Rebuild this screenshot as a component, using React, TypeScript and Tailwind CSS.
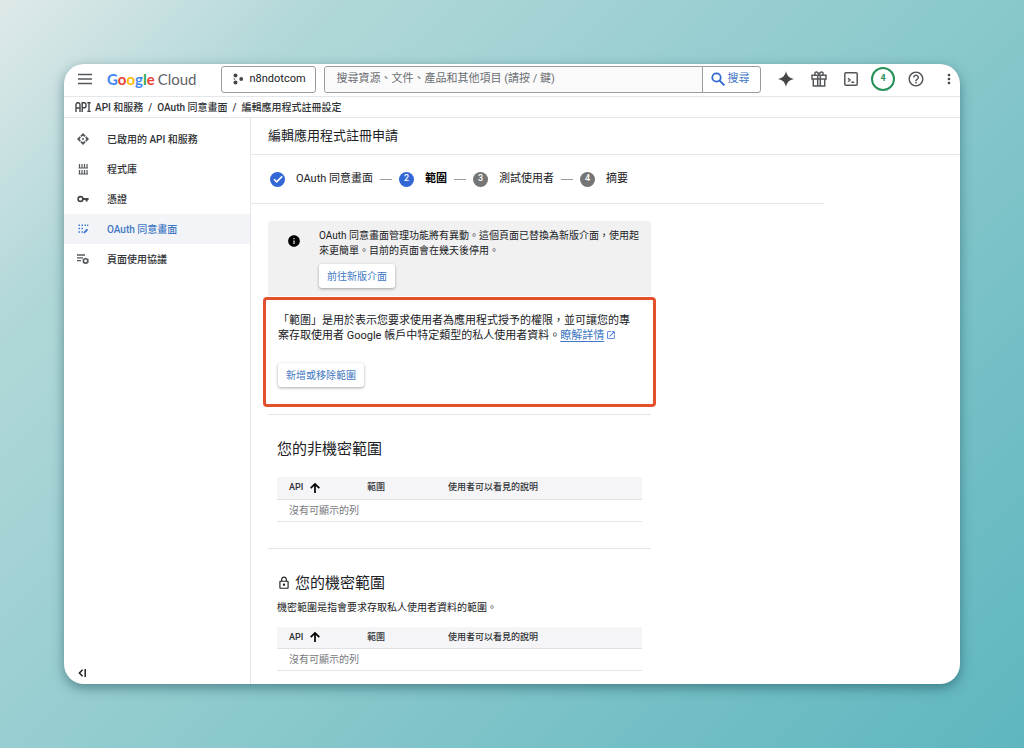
import type { ReactNode } from 'react';
import { MdHelpOutline, MdInfo, MdMoreVert, MdOpenInNew, MdOutlineLock } from 'react-icons/md';

const MenuIcon = () => (
  <svg viewBox="0 0 18 18" className="size-[18px]" fill="none" stroke="#55585b" strokeWidth="1.700">
    <path d="M2 4.500h14M2 9h14M2 13.500h14" />
  </svg>
);

const SearchIcon = () => (
  <svg viewBox="0 0 16 16" className="size-4" fill="none" stroke="#2f69cf" strokeWidth="1.800">
    <circle cx="6.500" cy="6.500" r="4.200" />
    <path d="M9.600 9.600l4.800 4.800" strokeWidth="2" />
  </svg>
);

const CheckIcon = () => (
  <svg viewBox="0 0 12 12" className="size-3" fill="none" stroke="#fff" strokeWidth="1.500">
    <path d="M2 6.200l2.700 2.700L10.200 3.400" />
  </svg>
);

const SortIcon = () => (
  <svg viewBox="0 0 12 12" className="size-3" fill="none" stroke="#000" strokeWidth="1.700">
    <path d="M6 11V2M1.700 6.200L6 1.900l4.300 4.300" />
  </svg>
);

const ProjectIcon = () => (
  <svg viewBox="0 0 12 12" className="size-3" fill="#444746">
    <circle cx="3.5" cy="2.6" r="2" />
    <circle cx="3.5" cy="9.4" r="2" />
    <circle cx="9.2" cy="6" r="1.9" />
    <circle cx="2.4" cy="6" r="0.8" />
  </svg>
);

const SparkIcon = () => (
  <svg viewBox="0 0 16 16" className="size-4" fill="#444746">
    <path d="M8 0c.9 4.700 3.300 7.100 8 8-4.700.9-7.100 3.300-8 8-.9-4.700-3.300-7.100-8-8 4.700-.9 7.100-3.300 8-8z" />
  </svg>
);

const GiftIcon = () => (
  <svg viewBox="0 0 16 16" className="size-4" fill="none" stroke="#55585b" strokeWidth="1.500">
    <path d="M1 4.300h14v3.700H1zM2.300 8v6.900h11.400V8M6.700 4.300v10.600M9.300 4.300v10.600" />
    <path d="M8 4.200C7.600 1.900 6.600.9 5.400.9 3.600.9 3.300 3.300 4.800 4.200M8 4.200C8.400 1.900 9.400.9 10.600.9c1.800 0 2.100 2.400.6 3.300" />
  </svg>
);

const ShellIcon = () => (
  <svg viewBox="0 0 14 14" className="size-3.5" fill="none" stroke="#55585b" strokeWidth="1.500">
    <rect x="0.800" y="0.800" width="12.400" height="12.400" rx="1" />
    <path d="M4 6.300l2 1.700-2 1.700M7.300 10.200h3" />
  </svg>
);

const EnabledApisIcon = () => (
  <svg viewBox="0 0 12 12" className="size-3" fill="#55585b">
    <path d="M6 0l2.700 2.700-1.200 1.200L6 2.700l-1.500 1.200-1.200-1.200zM6 12L3.300 9.300l1.200-1.200L6 9.300l1.500-1.200 1.200 1.200zM0 6l2.700-2.700 1.200 1.200L2.700 6l1.200 1.500-1.200 1.200zM12 6L9.300 8.700 8.100 7.500 9.300 6 8.100 4.500l1.200-1.200z" />
    <circle cx="6" cy="6" r="1" />
  </svg>
);

const LibraryIcon = () => (
  <svg viewBox="0 0 12 12" className="size-3" fill="none" stroke="#55585b" strokeWidth="1">
    <path d="M2.500 1v4M5 1v4M7.500 1v4M10 1v4M2.500 7v4M5 7v4M7.500 7v4M10 7v4" strokeWidth="1.200" />
    <path d="M1.500 5h9.500M1.500 11h9.500" />
  </svg>
);

const KeyIcon = () => (
  <svg viewBox="0 0 12 12" className="size-3" fill="none" stroke="#444746" strokeWidth="1.600">
    <circle cx="3.500" cy="6" r="2.400" />
    <path d="M6 6h5.600M9.600 6v2.600" strokeWidth="2" />
  </svg>
);

const ConsentIcon = () => (
  <svg viewBox="0 0 12 12" className="size-3" fill="#3c78d8">
    <path d="M1.500 1.500h1.500v1.500H1.500zM4.500 1.500h1.500v1.500H4.500zM7.500 1.500h1.500v1.500H7.500zM1.500 4.800h1.500v1.500H1.500zM4.500 4.800h1.500v1.500H4.500zM1.500 8.200h1.500v1.500H1.500zM4.500 8.200h1.500v1.500H4.500z" />
    <path d="M6.600 10.300V8.900l3.200-3.300 1.300 1.300-3.200 3.400zM10 1.500h1.300v1.500H10z" />
  </svg>
);

const AgreementIcon = () => (
  <svg viewBox="0 0 12 12" className="size-3" fill="none" stroke="#55585b" strokeWidth="1.300">
    <path d="M0 2h8M0 4.800h6M0 7.600h4" />
    <circle cx="8.600" cy="7.900" r="2.200" strokeWidth="1.600" />
    <path d="M8.600 4.700v1M8.600 10.100v1M5.800 6.300l1 .6M10.400 8.900l1 .6M5.800 9.500l1-.6M10.400 6.900l1-.6" strokeWidth="1.200" />
  </svg>
);

const ApiIcon = () => (
  <svg viewBox="0 0 16 10" className="h-2.5 w-4" fill="none" stroke="#44474a" strokeWidth="1.400">
    <path d="M1 10V2.200L2.200.8h1.600L5 2.200V10M1 6h4M7.200 10V.8h2.600L11 2v2.600L9.800 5.800H7.200M12.300.8h3.400M14 .8v8.600M12.300 9.400h3.400" />
  </svg>
);

const CollapseIcon = () => (
  <svg viewBox="0 0 9 8" className="h-2 w-[9px]" fill="none" stroke="#202124" strokeWidth="1.500">
    <path d="M4.600.8L1.400 4l3.200 3.200M7.200 0v8" />
  </svg>
);

const navItems: { label: string; icon: ReactNode; active?: boolean }[] = [
  { label: '已啟用的 API 和服務', icon: <EnabledApisIcon /> },
  { label: '程式庫', icon: <LibraryIcon /> },
  { label: '憑證', icon: <KeyIcon /> },
  { label: 'OAuth 同意畫面', icon: <ConsentIcon />, active: true },
  { label: '頁面使用協議', icon: <AgreementIcon /> },
];

const steps = [
  { label: 'OAuth 同意畫面', state: 'done' },
  { label: '範圍', state: 'current' },
  { label: '測試使用者', state: 'todo' },
  { label: '摘要', state: 'todo' },
];

const Header = () => (
  <header className="flex h-[33px] items-center border-b border-[#e4e6ea] pb-0.5 pl-3 pr-[3px]">
    <button type="button" aria-label="選單">
      <MenuIcon />
    </button>
    <a href="#" className="ml-[13px] flex gap-[3px] text-[15px] leading-5" style={{ fontFamily: 'Lato, sans-serif' }}>
      <span className="font-bold">
        <span className="text-[#4285f4]">G</span>
        <span className="text-[#ea4335]">o</span>
        <span className="text-[#fbbc04]">o</span>
        <span className="text-[#4285f4]">g</span>
        <span className="text-[#34a853]">l</span>
        <span className="text-[#ea4335]">e</span>
      </span>
      <span className="text-[#5f6368]">Cloud</span>
    </a>
    <button
      type="button"
      className="ml-6 flex h-[27px] w-[95px] shrink-0 items-center gap-1.5 rounded-[3px] border border-[#9a9ca0] pl-2.5 text-[11px]"
    >
      <ProjectIcon />
      n8ndotcom
    </button>
    <form className="ml-2 flex h-[27px] min-w-0 flex-1 rounded-[3px] border border-[#9a9ca0]">
      <input
        type="search"
        aria-label="搜尋"
        placeholder="搜尋資源、文件、產品和其他項目 (請按 / 鍵)"
        className="min-w-0 flex-1 rounded-l-[3px] bg-[#fafafa] px-3 text-[11px] placeholder:text-[#6b6e72]"
      />
      <button
        type="button"
        className="flex w-[58px] items-center justify-center gap-0.5 border-l border-[#9a9ca0] pr-1 text-[11px] text-[#3f76c4]"
      >
        <SearchIcon />
        搜尋
      </button>
    </form>
    <div className="ml-[17px] flex items-center gap-[17px]">
      <button type="button" aria-label="Gemini"><SparkIcon /></button>
      <button type="button" aria-label="禮物"><GiftIcon /></button>
      <button type="button" aria-label="Cloud Shell"><ShellIcon /></button>
    </div>
    <button
      type="button"
      className="ml-[13px] size-6 rounded-full border-2 border-[#27915a] text-[9px] font-bold text-[#27915a]"
    >
      4
    </button>
    <button type="button" aria-label="說明" className="ml-3 text-[#55585b]">
      <MdHelpOutline className="size-[18px]" />
    </button>
    <button type="button" aria-label="更多" className="ml-4 text-[#444746]">
      <MdMoreVert className="size-4" />
    </button>
  </header>
);

const Breadcrumb = () => (
  <nav className="flex h-[21px] items-center gap-[5px] border-b border-[#e4e6ea] pl-[11px] text-[10px] font-medium text-[#303236]">
    <a href="#" className="flex items-center gap-1">
      <ApiIcon />
      API 和服務
    </a>
    <span>/</span>
    <a href="#">OAuth 同意畫面</a>
    <span>/</span>
    <span>編輯應用程式註冊設定</span>
  </nav>
);

const Sidebar = () => (
  <aside className="flex w-[187px] shrink-0 flex-col border-r border-[#e4e6ea] pt-1.5">
    {navItems.map((item) => (
      <a
        key={item.label}
        href="#"
        className={`flex h-[30px] items-center gap-[18px] pl-[13px] text-[10px] font-medium ${
          item.active ? 'bg-[#f3f4f8] text-[#3f78c3]' : 'text-[#303236]'
        }`}
      >
        {item.icon}
        {item.label}
      </a>
    ))}
    <button type="button" aria-label="收合" className="mb-[7px] ml-3.5 mt-auto w-4">
      <CollapseIcon />
    </button>
  </aside>
);

const Stepper = () => (
  <ol className="mr-[136px] flex h-[49px] items-center border-b border-[#e4e6ea] pl-[19px] text-[11px]">
    {steps.map((step, index) => (
      <li key={step.label} className="flex items-center">
        {index > 0 && <span className="mx-[7px] h-px w-3 bg-[#9a9ca0]" />}
        <span
          className={`flex size-[15px] items-center justify-center rounded-full text-[9px] font-medium text-white ${
            step.state === 'todo' ? 'bg-[#757575]' : 'bg-[#3367d6]'
          }`}
        >
          {step.state === 'done' ? <CheckIcon /> : index + 1}
        </span>
        <span className={`ml-[11px] ${step.state === 'current' ? 'font-bold text-black' : ''}`}>{step.label}</span>
      </li>
    ))}
  </ol>
);

const ScopeTable = () => (
  <table className="w-full table-fixed text-left">
    <thead>
      <tr className="h-[22px] border-b border-[#e0e2e6] bg-[#f5f5f7] text-[9px] text-[#303236]">
        <th className="w-[78px] pl-3 font-medium">
          <span className="flex items-center gap-1.5">
            API
            <SortIcon />
          </span>
        </th>
        <th className="w-[81px] pl-3 font-medium">範圍</th>
        <th className="pl-3 font-medium">使用者可以看見的說明</th>
      </tr>
    </thead>
    <tbody>
      <tr className="h-[22px] border-b border-[#e4e6ea] text-[10px] text-[#77797d]">
        <td colSpan={3} className="pl-3">沒有可顯示的列</td>
      </tr>
    </tbody>
  </table>
);

const raisedButton =
  'rounded-[3px] bg-white px-2 h-6 text-[10px] text-[#3f78c3] shadow-[0_1px_3px_rgba(0,0,0,0.35)]';

const App = () => {
  return (
    <div
      lang="zh-Hant"
      className="flex min-h-screen bg-[linear-gradient(135deg,#dfe9e9_0%,#b2d8d9_18%,#95cdd0_45%,#76c0c6_75%,#5fb6bf_100%)] p-16 text-[#202124]"
      style={{ fontFamily: 'Roboto, "Noto Sans CJK TC", sans-serif' }}
    >
      <div className="flex min-w-0 flex-1 flex-col overflow-hidden rounded-[20px] bg-white shadow-[0_4px_12px_rgba(20,70,80,0.5)]">
        <Header />
        <Breadcrumb />
        <div className="flex flex-1">
          <Sidebar />
          <main className="min-w-0 flex-1">
            <h1 className="flex h-[37px] items-center border-b border-[#e4e6ea] pl-[17px] text-[13px]">
              編輯應用程式註冊申請
            </h1>
            <Stepper />

            <div className="ml-[17px] mt-[17px] max-w-[383px]">
              <div className="flex h-[75px] rounded-t-[3px] bg-[#f1f1f2] pl-[19px] pt-[7px]">
                <MdInfo className="mr-[18px] mt-1.5 size-3.5 shrink-0 text-black" />
                <div>
                  <p className="max-w-[324px] text-[10px] leading-[15px]">
                    OAuth 同意畫面管理功能將有異動。這個頁面已替換為新版介面，使用起來更簡單。目前的頁面會在幾天後停用。
                  </p>
                  <button type="button" className={`mt-1.5 ${raisedButton}`}>前往新版介面</button>
                </div>
              </div>

              <section className="-mx-[5px] mt-px h-[110px] rounded-[4px] border-[3px] border-[#e2502c] px-3 pt-[13px]">
                <p className="max-w-[360px] text-[11px] leading-[15px]">
                  「範圍」是用於表示您要求使用者為應用程式授予的權限，並可讓您的專案存取使用者 Google 帳戶中特定類型的私人使用者資料。
                  <a href="#" className="text-[#3f78c3] underline underline-offset-2">瞭解詳情</a>
                  <MdOpenInNew className="ml-0.5 inline size-2.5 align-[-1px] text-[#3367d6]" />
                </p>
                <button type="button" className={`mt-5 ${raisedButton}`}>新增或移除範圍</button>
              </section>

              <section className="mt-[7px] border-y border-[#e4e6ea] px-[9px] pb-[26px] pt-[23px]">
                <h2 className="mb-[17px] text-[15px] leading-[22px]">您的非機密範圍</h2>
                <ScopeTable />
              </section>

              <section className="px-[9px] pt-[23px]">
                <h2 className="flex items-center gap-1 text-[15px] leading-[22px]">
                  <MdOutlineLock className="size-3.5" />
                  您的機密範圍
                </h2>
                <p className="mb-3 mt-1.5 text-[10px] leading-[15px]">
                  機密範圍是指會要求存取私人使用者資料的範圍。
                </p>
                <ScopeTable />
              </section>
            </div>
          </main>
        </div>
      </div>
    </div>
  );
};

export default App;
